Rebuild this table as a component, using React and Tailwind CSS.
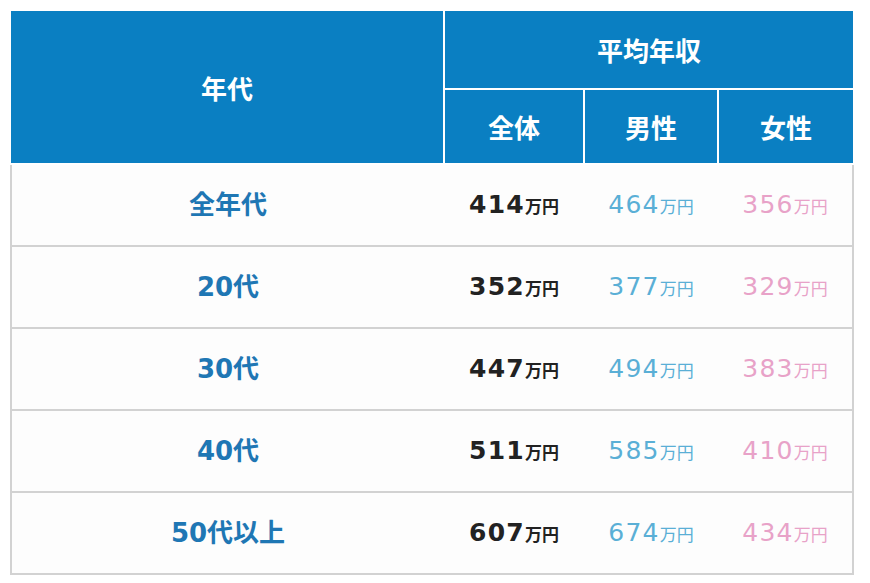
const rows = [
  { age: '全年代', all: 414, male: 464, female: 356 },
  { age: '20代', all: 352, male: 377, female: 329 },
  { age: '30代', all: 447, male: 494, female: 383 },
  { age: '40代', all: 511, male: 585, female: 410 },
  { age: '50代以上', all: 607, male: 674, female: 434 },
];

const font = "font-['DejaVu_Sans','Noto_Sans_CJK_JP',sans-serif]";

const Amount = ({ value, className }) => (
  <span className={`inline-flex items-baseline ${className}`}>
    <span className="text-[25px] tracking-[0.05em]">{value}</span>
    <span className="text-[17px] font-['Noto_Sans_CJK_JP',sans-serif]">万円</span>
  </span>
);

export default function App() {
  return (
    <div className={`w-[870px] h-[583px] bg-white pt-[11px] pl-[10px] ${font}`}>
      <table className="border-collapse table-fixed w-[842px]">
        <colgroup>
          <col className="w-[433px]" />
          <col className="w-[140px]" />
          <col className="w-[134px]" />
          <col className="w-[135px]" />
        </colgroup>
        <thead className="bg-[#0a7fc2] text-white font-bold text-[26px] font-['Noto_Sans_CJK_JP',sans-serif]">
          <tr className="h-[78px]">
            <th rowSpan={2} className="border-r-2 border-b-2 border-white">年代</th>
            <th colSpan={3} className="border-b-2 border-white">平均年収</th>
          </tr>
          <tr className="h-[75px]">
            <th className="border-r-2 border-b-2 border-white">全体</th>
            <th className="border-r-2 border-b-2 border-white">男性</th>
            <th className="border-b-2 border-white">女性</th>
          </tr>
        </thead>
        <tbody>
          {rows.map((r) => (
            <tr key={r.age} className="h-[82px] bg-[#fdfdfd]">
              <td className="border-l-2 border-b-2 border-[#d2d2d2] text-center text-[26px] font-bold text-[#1f77b4]">
                {r.age}
              </td>
              <td className="border-b-2 border-[#d2d2d2] text-center">
                <Amount value={r.all} className="font-bold text-[#222]" />
              </td>
              <td className="border-b-2 border-[#d2d2d2] text-center">
                <Amount value={r.male} className="text-[#5aafd6]" />
              </td>
              <td className="border-r-2 border-b-2 border-[#d2d2d2] text-center">
                <Amount value={r.female} className="text-[#e8a2c8]" />
              </td>
            </tr>
          ))}
        </tbody>
      </table>
    </div>
  );
}
